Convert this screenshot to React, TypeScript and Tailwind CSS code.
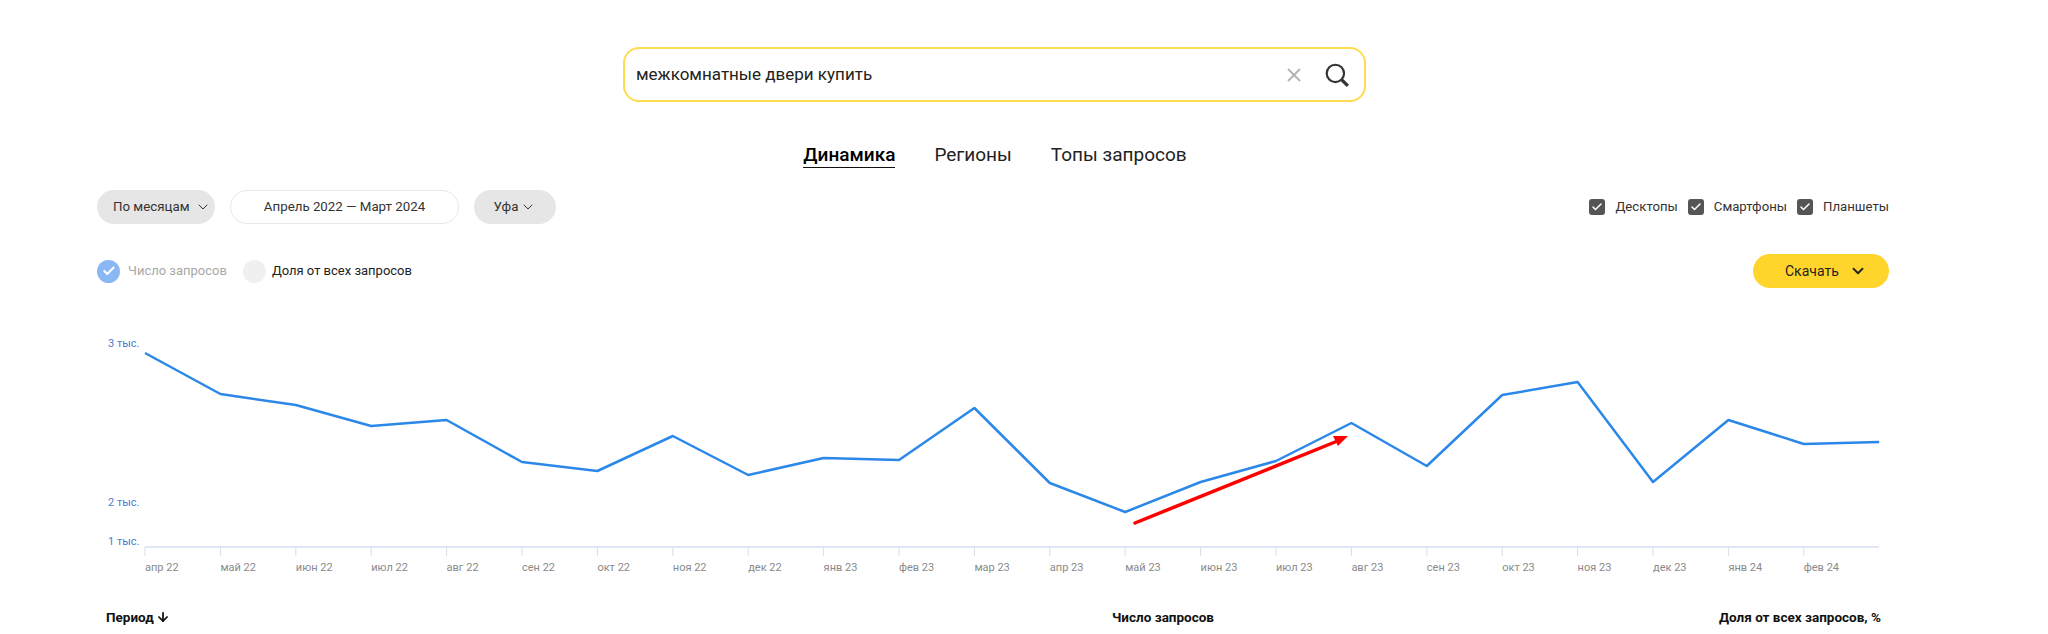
import { Check, ChevronDown, X, ArrowDown } from 'lucide-react';

const months = ['апр 22', 'май 22', 'июн 22', 'июл 22', 'авг 22', 'сен 22', 'окт 22', 'ноя 22', 'дек 22', 'янв 23', 'фев 23', 'мар 23', 'апр 23', 'май 23', 'июн 23', 'июл 23', 'авг 23', 'сен 23', 'окт 23', 'ноя 23', 'дек 23', 'янв 24', 'фев 24'];
const values = [353, 394, 405, 426, 420, 462, 471, 436, 475, 458, 460, 408, 483, 512, 482, 461, 423, 466, 395, 382, 482, 420, 444, 442];

const STEP = 75.4;
const x0 = 145;

function DeviceCheck({ label }: { label: string }) {
  return (
    <div className="flex items-center gap-[10px]">
      <div className="w-[16px] h-[16px] rounded-[3px] bg-[#555555] flex items-center justify-center">
        <Check className="w-[12px] h-[12px] text-white" strokeWidth={3} />
      </div>
      <span className="text-[13.2px] text-[#333333]">{label}</span>
    </div>
  );
}

export default function App() {
  return (
    <div className="w-[2048px] h-[634px] overflow-hidden bg-white pt-[47px] pl-[97px] pr-[159px] text-black font-['Roboto',sans-serif]">
      {/* Search */}
      <div className="ml-[526px] w-[743px] h-[55px] rounded-[16px] border-2 border-[#ffdb4d] flex items-center pl-[11px] pr-[14px]">
        <span className="text-[17px] flex-1 text-[#222222]">межкомнатные двери купить</span>
        <X className="w-[22px] h-[22px] text-[#b3b3b3] mr-[19px]" strokeWidth={2} />
        <svg width="26" height="26" viewBox="0 0 24 24" fill="none" stroke="#333333">
          <circle cx="10.5" cy="10.5" r="8" strokeWidth="2" />
          <line x1="16.5" y1="16.5" x2="22" y2="22" strokeWidth="3" />
        </svg>
      </div>

      {/* Tabs */}
      <div className="mt-[40px] ml-[4px] flex justify-center gap-[39px] text-[19px] h-[28px] items-start leading-[26px]">
        <span className="font-medium border-b border-[#111111] h-[26px]">Динамика</span>
        <span className="text-[#222222]">Регионы</span>
        <span className="text-[#222222]">Топы запросов</span>
      </div>

      {/* Filters */}
      <div className="mt-[20px] flex items-center">
        <div className="flex items-center gap-[15px] text-[13.3px] text-[#333333]">
          <div className="h-[34px] w-[118px] rounded-full bg-[#e6e6e6] flex items-center pl-[16px] gap-[5px]">
            По месяцам
            <ChevronDown className="w-[16px] h-[16px]" strokeWidth={1.5} />
          </div>
          <div className="h-[34px] w-[229px] rounded-full border border-[#e8e8e8] flex items-center justify-center">Апрель 2022 — Март 2024</div>
          <div className="h-[34px] w-[82px] rounded-full bg-[#e6e6e6] flex items-center justify-center gap-[2px]">
            Уфа
            <ChevronDown className="w-[16px] h-[16px]" strokeWidth={1.5} />
          </div>
        </div>
        <div className="ml-auto flex items-center gap-[10px]">
          <DeviceCheck label="Десктопы" />
          <DeviceCheck label="Смартфоны" />
          <DeviceCheck label="Планшеты" />
        </div>
      </div>

      {/* Metric switch + download */}
      <div className="mt-[30px] flex items-center text-[13px]">
        <div className="w-[23px] h-[23px] rounded-full bg-[#8ab8f5] flex items-center justify-center">
          <Check className="w-[14px] h-[14px] text-white" strokeWidth={3.5} />
        </div>
        <span className="ml-[8px] text-[#a8a8a8]">Число запросов</span>
        <div className="ml-[16px] w-[23px] h-[23px] rounded-full bg-[#f0f0f0]" />
        <span className="ml-[6px] text-[#222222]">Доля от всех запросов</span>
        <div className="ml-auto w-[136px] h-[34px] rounded-full bg-[#ffd52b] flex items-center pl-[32px] gap-[10px] text-[14px] text-[#222222]">
          Скачать
          <ChevronDown className="w-[18px] h-[18px]" strokeWidth={2.5} />
        </div>
      </div>

      {/* Chart */}
      <svg width="1792" height="252" viewBox="97 320 1792 252" className="block mt-[32px] overflow-visible">
        <g fontSize="11" fill="#4a7bd0" fontFamily="Roboto, sans-serif">
          <text x="108" y="347">3 тыс.</text>
          <text x="108" y="506">2 тыс.</text>
          <text x="108" y="545">1 тыс.</text>
        </g>
        <line x1="145" y1="547" x2="1879" y2="547" stroke="#dfe7f5" strokeWidth="2" />
        {months.map((m, i) => (
          <g key={m}>
            <line x1={x0 + i * STEP} y1="547" x2={x0 + i * STEP} y2="556" stroke="#d5deee" />
            <text x={x0 + i * STEP} y="571" fontSize="11" fill="#8a8a8a" fontFamily="Roboto, sans-serif">{m}</text>
          </g>
        ))}
        <polyline fill="none" stroke="#2b87e8" strokeWidth="2.5" strokeLinejoin="round" points={values.map((v, i) => `${x0 + i * STEP},${v}`).join(' ')} />
        <line x1="1135" y1="523" x2="1340" y2="440" stroke="#ff0000" strokeWidth="3.5" strokeLinecap="round" />
        <polygon points="1348,436 1333,436 1338,446" fill="#ff0000" />
      </svg>

      {/* Table head */}
      <div className="mt-[35px] ml-[9px] mr-[8px] flex text-[13.5px] font-bold text-[#111111]">
        <div className="flex items-center gap-[2px] w-[1006px]">
          Период
          <ArrowDown className="w-[14px] h-[14px]" strokeWidth={3} />
        </div>
        <div className="w-[500px]">Число запросов</div>
        <div className="flex-1 text-right whitespace-nowrap">Доля от всех запросов, %</div>
      </div>
    </div>
  );
}
